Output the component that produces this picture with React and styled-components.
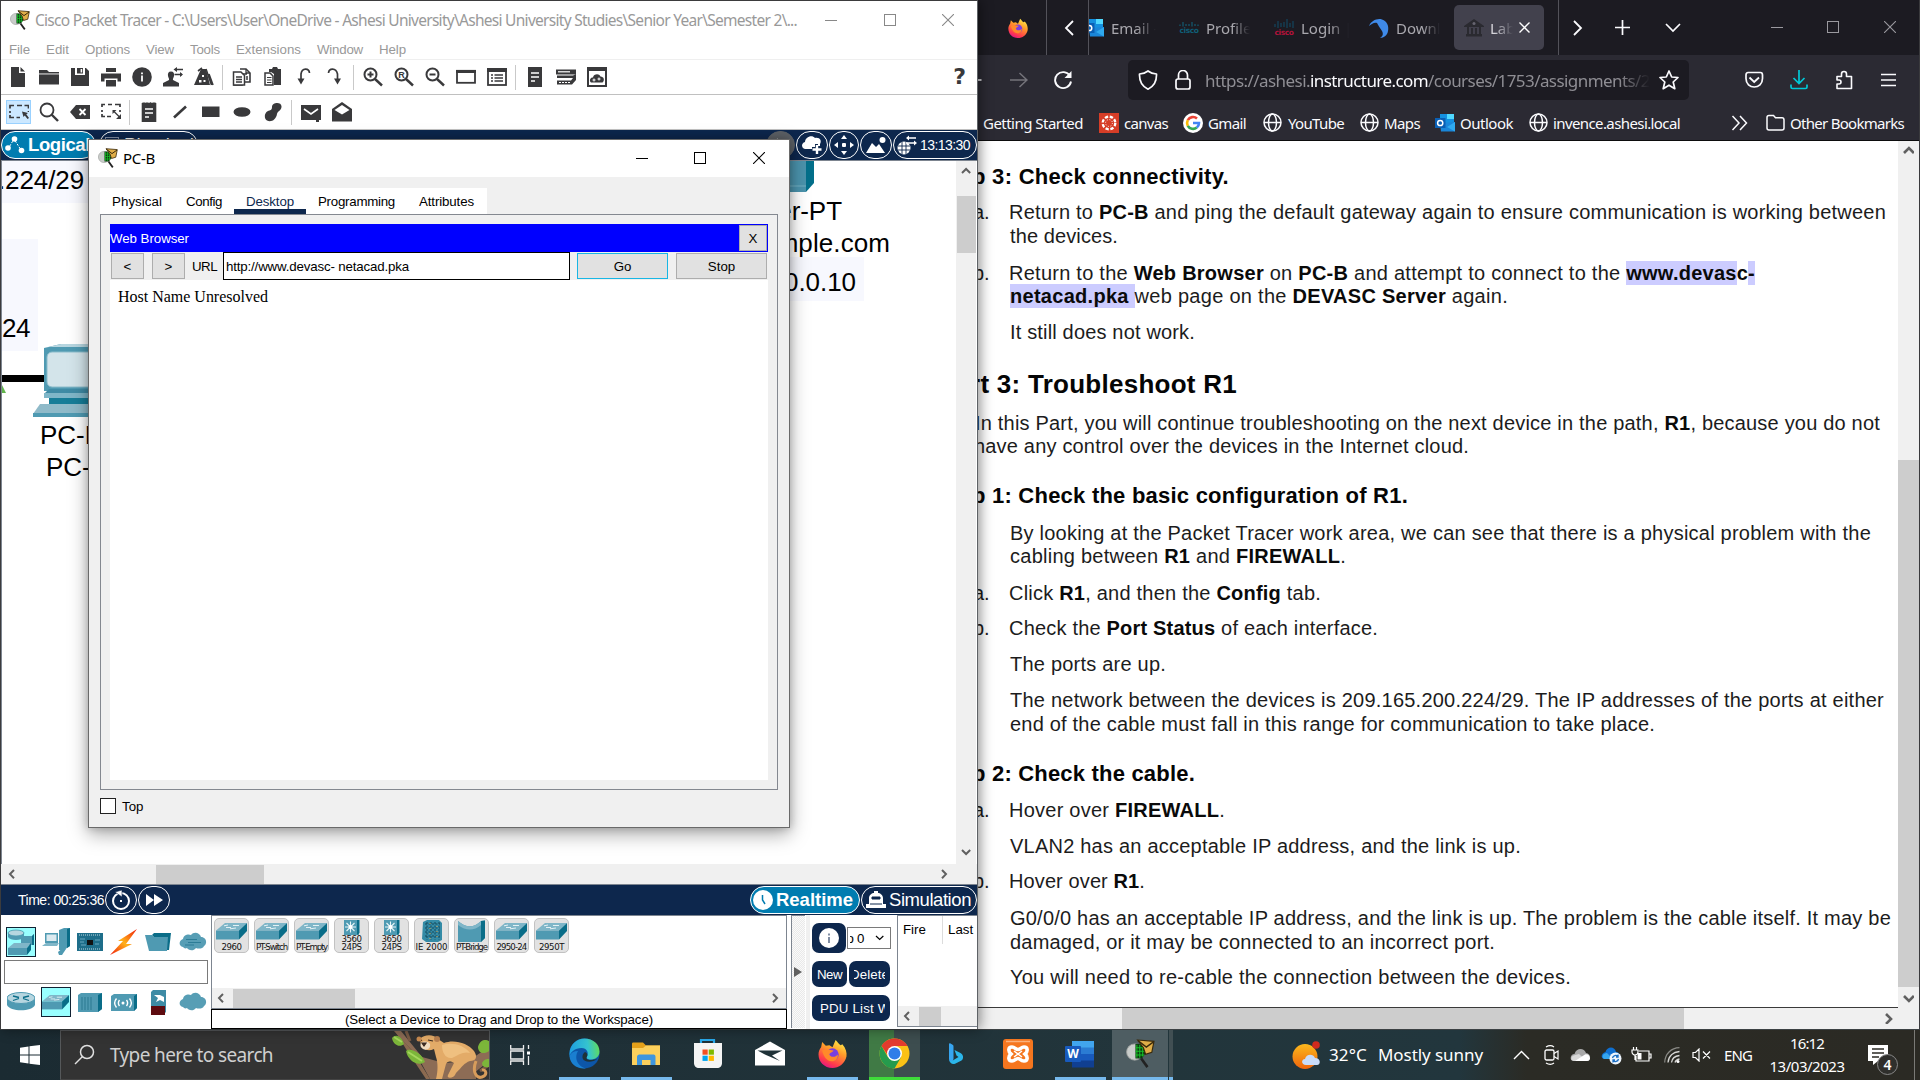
import React, { useLayoutEffect, useRef, useState } from "react";
import styled, { createGlobalStyle, css } from "styled-components";

const SANS = `"Liberation Sans", Arial, sans-serif`;
const UI = `"Noto Sans", "Open Sans", sans-serif`;
const NAVY = "#0d274d";
const INK = "#39393b";

const Global = createGlobalStyle`
  * { box-sizing: border-box; }
  html, body { margin: 0; padding: 0; background: #1f3036; }
  svg { display: block; flex: none; }
`;

/* ---------- text that keeps a fixed advance width ---------- */
const FitBox = styled.span`
  display: block;
  flex: none;
  width: ${(p) => p.$w}px;
  white-space: pre;
`;
const FitText = styled.span`
  display: inline-block;
  white-space: pre;
`;
function Fit({ w, children }) {
  const ref = useRef(null);
  const [spacing, setSpacing] = useState(0);
  useLayoutEffect(() => {
    const el = ref.current;
    el.style.letterSpacing = "0px";
    const natural = el.getBoundingClientRect().width;
    const next = (w - natural) / el.textContent.length;
    el.style.letterSpacing = `${next}px`;
    setSpacing(next);
  }, [w]);
  return (
    <FitBox $w={w}>
      <FitText ref={ref} style={{ letterSpacing: `${spacing}px` }}>{children}</FitText>
    </FitBox>
  );
}

const Svg = ({ w = 20, h = w, vb, children, ...rest }) => (
  <svg width={w} height={h} viewBox={vb || `0 0 ${w} ${h}`} fill="none" {...rest}>{children}</svg>
);

/* ---------- shell ---------- */
const Desktop = styled.div`
  width: 1920px;
  height: 1080px;
  display: flex;
  flex-direction: column;
  overflow: hidden;
  font-family: ${SANS};
`;
const Windows = styled.div`
  height: 1030px;
  display: flex;
  border-bottom: 1px solid #3c4143;
`;
const Row = styled.div`
  display: flex;
  align-items: center;
`;
const Space = styled.div`
  flex: none;
  width: ${(p) => p.$w}px;
`;
const Grow = styled.div`
  flex: 1;
`;

/* ---------- packet tracer window ---------- */
const Tracer = styled.section`
  position: relative;
  z-index: 2;
  flex: none;
  width: 978px;
  height: 1029px;
  display: flex;
  flex-direction: column;
  background: #fff;
  border: 1px solid #3b3b3d;
  border-bottom: 0;
  border-right-color: #5e6266;
  box-shadow: 2px 0 12px rgba(0, 0, 0, 0.45);
`;
const TitleBar = styled(Row)`
  height: 38px;
  padding-left: 9px;
  font: 15.5px/20px ${UI};
  color: #999;
  gap: 5px;
  flex: none;
`;
const Captions = styled.div`
  display: flex;
  align-self: stretch;
  padding-right: ${(p) => p.$pr || 0}px;
  padding-bottom: 1px;
`;
const Caption = styled.div`
  display: flex;
  align-items: center;
  justify-content: center;
  flex: none;
  width: ${(p) => p.$w || 58.5}px;
  color: ${(p) => p.$c};
`;
const MenuBar = styled(Row)`
  height: 21px;
  flex: none;
  padding-left: 8px;
  gap: 16px;
  font-size: 13.3px;
  color: #999;
  border-bottom: 1px solid #efefef;
`;
const ToolBar = styled(Row)`
  height: 35px;
  flex: none;
  padding-left: 1px;
  border-bottom: 1px solid #c0c0c0;
  color: ${INK};
`;
const Tool = styled.div`
  width: 31px;
  height: 34px;
  display: flex;
  align-items: center;
  justify-content: center;
  flex: none;
`;
const ActiveTool = styled.div`
  width: 25px;
  height: 24px;
  margin-left: 2px;
  display: flex;
  align-items: center;
  justify-content: center;
  background: #cce8ff;
  border: 1px solid #99d1ff;
`;
const ToolSep = styled.div`
  width: 1px;
  height: 25px;
  margin: 0 3px;
  background: #c9c9c9;
  flex: none;
`;
const Help = styled.div`
  margin-right: 11px;
  font: bold 22px/24px "DejaVu Sans", sans-serif;
  color: ${INK};
`;
const NavyBar = styled(Row)`
  height: ${(p) => p.$h}px;
  flex: none;
  background: ${NAVY};
  border-top: ${(p) => (p.$line ? "1px solid #7d8590" : "0")};
  color: #fff;
  gap: 1px;
`;
const Pill = styled.div`
  display: flex;
  align-items: center;
  justify-content: ${(p) => p.$j || "center"};
  flex: none;
  width: ${(p) => p.$w}px;
  height: 28px;
  padding-left: ${(p) => p.$pl || 0}px;
  gap: 3px;
  border: 1px solid ${(p) => p.$line || "#fff"};
  border-radius: 14px;
  background: ${(p) => p.$bg || "transparent"};
  color: #fff;
  font-size: ${(p) => p.$fs || 18.5}px;
  font-weight: ${(p) => (p.$bold ? 700 : 400)};
`;
const SimTime = styled.div`
  font-size: 14px;
`;
const Workspace = styled.div`
  display: flex;
  height: 704px;
  flex: none;
  border-top: 1px solid #7d8590;
  border-left: 1px solid #7d8590;
`;
const Canvas = styled.div`
  position: relative;
  width: 954px;
  overflow: hidden;
  background: #fff;
`;
const Tag = styled.div`
  position: absolute;
  left: ${(p) => p.$x}px;
  top: ${(p) => p.$y}px;
  width: ${(p) => p.$w || "auto"};
  height: ${(p) => p.$h || "auto"};
  background: ${(p) => p.$bg || "transparent"};
  font-size: 26px;
  line-height: 32px;
  white-space: pre;
  color: #000;
`;
const VScroll = styled.div`
  width: ${(p) => p.$w}px;
  flex: none;
  display: flex;
  flex-direction: column;
  align-items: center;
  background: #f0f0f0;
  color: #606060;
`;
const HScroll = styled(Row)`
  height: ${(p) => p.$h}px;
  flex: none;
  background: #f0f0f0;
  color: #606060;
`;
const Thumb = styled.div`
  background: #cdcdcd;
  flex: none;
  width: ${(p) => p.$w}px;
  height: ${(p) => p.$h}px;
`;
const ArrowCell = styled.div`
  height: ${(p) => p.$h}px;
  padding-top: ${(p) => p.$pt}px;
`;
const Bottom = styled.div`
  display: flex;
  height: 114px;
  background: #fff;
  flex: none;
`;
const Kinds = styled.div`
  width: 210px;
  flex: none;
  display: flex;
  flex-direction: column;
  padding: 12px 0 0 3px;
`;
const KindRow = styled.div`
  display: grid;
  grid-template-columns: repeat(6, 34.4px);
  height: 30px;
  align-items: center;
  justify-items: center;
`;
const Kind = styled.div`
  width: 30px;
  height: 30px;
  display: flex;
  align-items: center;
  justify-content: center;
  ${(p) => p.$on && css`background: #99ffff; border: 1px solid #123;`}
`;
const SearchBox = styled.div`
  width: 204px;
  height: 24px;
  margin: 3px 0 3px;
  border: 1px solid #7a7a7a;
  background: #fff;
`;
const Devices = styled.div`
  width: 576px;
  flex: none;
  display: flex;
  flex-direction: column;
`;
const DeviceView = styled.div`
  height: 94px;
  border: 1px solid #7d8590;
  display: flex;
  flex-direction: column;
  justify-content: space-between;
`;
const DeviceRow = styled.div`
  display: flex;
  gap: 5px;
  padding: 2px 0 0 2px;
`;
const Device = styled.div`
  width: 35px;
  height: 35px;
  display: flex;
  flex-direction: column;
  align-items: center;
  justify-content: space-between;
  padding-bottom: 1px;
  border: 1px solid #c2c2c2;
  border-radius: 5px;
  background: #e2e2e2;
  font: 8.6px/8px "DejaVu Sans", sans-serif;
  color: #111;
`;
const DeviceArt = styled.div`
  flex: 1;
  display: flex;
  align-items: center;
`;
const Hint = styled.div`
  height: 20px;
  border: 1px solid #000;
  display: flex;
  justify-content: center;
  align-items: center;
  font-size: 13.3px;
`;
const Splitter = styled.div`
  width: 14px;
  height: 113px;
  margin-left: 4px;
  border-left: 1px solid #7d8590;
  border-top: 1px solid #7d8590;
  background: repeating-conic-gradient(#e9e9e9 0 25%, #fafafa 0 50%) 0 0 / 2px 2px;
  display: flex;
  align-items: center;
  flex: none;
`;
const Pdu = styled.div`
  width: 91px;
  margin-left: 1px;
  padding: 8px 0 0 2px;
  border-left: 4px solid #f0f0f0;
  flex: none;
  display: flex;
  flex-direction: column;
  gap: 8px;
`;
const NavyButton = styled.div`
  width: ${(p) => p.$w}px;
  height: ${(p) => p.$h || 26}px;
  padding: 0 5px;
  display: flex;
  align-items: center;
  justify-content: center;
  overflow: hidden;
  background: ${NAVY};
  border-radius: 7px;
  color: #fff;
  font-size: 13.3px;
`;
const Clip = styled.div`
  overflow: hidden;
  display: flex;
  justify-content: ${(p) => p.$j || "center"};
  width: 100%;
`;
const Combo = styled.div`
  width: 44px;
  height: 22px;
  padding: 0 6px 0 2px;
  border: 1px solid #7a7a7a;
  display: flex;
  align-items: center;
  justify-content: space-between;
  font-size: 13.3px;
`;
const Half = styled.span`
  display: inline-flex;
  justify-content: flex-end;
  width: 4px;
  margin-right: 3px;
  overflow: hidden;
`;
const Events = styled.div`
  flex: 1;
  height: 112px;
  border: 1px solid #7d8590;
  border-right: 0;
  display: flex;
  flex-direction: column;
  overflow: hidden;
  font-size: 13.3px;
`;
const EventHead = styled.div`
  display: grid;
  grid-template-columns: 45px 1fr;
  height: 27px;
  align-items: center;
`;
const HeadCell = styled.div`
  height: 100%;
  padding-left: 5px;
  line-height: 28px;
  border-right: ${(p) => (p.$line ? "1px solid #dcdcdc" : "0")};
`;

/* ---------- PC-B dialog ---------- */
const Dialog = styled.div`
  position: absolute;
  left: 87px;
  top: 138px;
  z-index: 3;
  width: 702px;
  height: 689px;
  display: flex;
  flex-direction: column;
  background: #f0f0f0;
  border: 1px solid #6a6a6a;
  box-shadow: 0 6px 18px rgba(0, 0, 0, 0.35), 0 0 8px rgba(0, 0, 0, 0.2);
  font-size: 13.3px;
`;
const DialogTitle = styled(Row)`
  height: 37px;
  background: #fff;
  padding: 0 0 1px 9px;
  gap: 5px;
  font: 15px/20px ${UI};
  flex: none;
`;
const Tabs = styled.div`
  display: flex;
  width: 387px;
  height: 26px;
  margin: 11px 0 0 11px;
  background: #fff;
  flex: none;
`;
const Tab = styled.div`
  display: flex;
  align-items: center;
  padding: 0 12px;
  color: ${(p) => (p.$on ? NAVY : "#000")};
  box-shadow: ${(p) => (p.$on ? `inset 0 -5px 0 ${NAVY}` : "none")};
`;
const Pane = styled.div`
  width: 678px;
  height: 576px;
  margin-left: 11px;
  padding: 9px;
  border: 1px solid #848890;
  display: flex;
  flex-direction: column;
  flex: none;
`;
const BrowserHead = styled(Row)`
  height: 28px;
  background: #0000ff;
  color: #fff;
  justify-content: space-between;
  padding-right: 1px;
`;
const Button = styled.div`
  width: ${(p) => p.$w}px;
  height: 26px;
  flex: none;
  display: flex;
  align-items: center;
  justify-content: center;
  background: #e1e1e1;
  border: 1px solid ${(p) => p.$line || "#adadad"};
  color: #000;
`;
const UrlInput = styled.div`
  width: 347px;
  height: 28px;
  margin: 0 7px 0 6px;
  padding-left: 2px;
  border: 1px solid #000;
  background: #fff;
  display: flex;
  align-items: center;
`;
const Page = styled.div`
  flex: 1;
  background: #fff;
  padding: 8px;
  font: 16px/18px "Liberation Serif", serif;
`;
const TopRow = styled(Row)`
  gap: 6px;
  padding: 8px 0 0 11px;
`;
const Check = styled.div`
  width: 16px;
  height: 16px;
  border: 1px solid #222;
  background: #fff;
`;

/* ---------- firefox ---------- */
const Fox = styled.section`
  width: 942px;
  height: 1029px;
  display: flex;
  flex-direction: column;
  background: #2b2a33;
  border-right: 1px solid #3a3a3d;
  overflow: hidden;
  color: #fbfbfe;
  font-family: ${UI};
`;
const TabStrip = styled(Row)`
  height: 55px;
  background: #1c1b22;
  flex: none;
`;
const StripSep = styled.div`
  width: 1px;
  height: 55px;
  background: #53525a;
  flex: none;
`;
const FoxTab = styled(Row)`
  width: ${(p) => p.$w}px;
  height: 45px;
  flex: none;
  gap: 7px;
  font-size: 15px;
  overflow: hidden;
  color: #a9a8ae;
`;
const Fade = styled.div`
  overflow: hidden;
  white-space: pre;
  flex: none;
  width: ${(p) => p.$w}px;
  mask-image: linear-gradient(to right, #000 ${(p) => p.$from || 50}%, transparent 100%);
`;
const ActiveTab = styled(Row)`
  width: 90px;
  height: 45px;
  margin-left: -10px;
  padding-left: 10px;
  gap: 6px;
  flex: none;
  border-radius: 5px;
  background: #42414d;
  font-size: 15px;
  color: #d5d4da;
`;
const CiscoMark = styled.div`
  width: 20px;
  height: 20px;
  flex: none;
  display: flex;
  flex-direction: column;
  align-items: center;
  padding-top: ${(p) => (p.$tall ? 0 : 4)}px;
  color: ${(p) => p.$word};
  font: bold 7.5px/8px "DejaVu Sans", sans-serif;
`;
const NavRow = styled(Row)`
  height: 50px;
  flex: none;
`;
const UrlBar = styled(Row)`
  width: 561px;
  height: 40px;
  flex: none;
  border-radius: 5px;
  background: #1c1b22;
  padding-left: 10px;
  color: #8f8e94;
  font-size: 17px;
`;
const UrlFade = styled.div`
  width: 445px;
  mask-image: linear-gradient(to right, #000 93%, transparent 100%);
`;
const Bright = styled.span`
  color: #fbfbfe;
`;
const Bookmarks = styled(Row)`
  height: 35px;
  flex: none;
  padding-left: 5px;
  font-size: 15px;
`;
const View = styled.div`
  flex: 1;
  display: flex;
  border-top: 1px solid #0c0c0d;
  background: #fff;
`;
const DocSide = styled.div`
  width: 920px;
  display: flex;
  flex-direction: column;
`;
const Doc = styled.article`
  height: 867px;
  border-bottom: 1px solid #3a3a3a;
  overflow: hidden;
  color: #1c1c1c;
  font-family: ${SANS};
  font-size: 20px;
  line-height: 24px;
  b { color: #0a0a0a; }
`;
const DocLine = styled.div`
  display: flex;
  height: 24px;
  align-items: center;
  margin-top: ${(p) => p.$mt}px;
  margin-left: ${(p) => p.$x}px;
  font-size: ${(p) => p.$fs || 20}px;
  font-weight: ${(p) => (p.$bold ? 700 : 400)};
  color: ${(p) => (p.$bold ? "#050505" : "inherit")};
`;
const Marker = styled.span`
  width: 36px;
  flex: none;
`;
const Marked = styled.span`
  background: #ccccff;
  padding: 1px 0;
`;

/* ---------- taskbar ---------- */
const Taskbar = styled(Row)`
  height: 50px;
  background: linear-gradient(to right, #1b2b32 0, #1f3037 30%, #22353b 60%, #22363d 76%, #2b2b25 79.5%, #2b2a24 100%);
  color: #fff;
  font-family: ${UI};
`;
const Start = styled.div`
  width: 60px;
  display: flex;
  justify-content: center;
`;
const Search = styled(Row)`
  width: 430px;
  height: 50px;
  background: #333;
  border: 1px solid #55585a;
  border-bottom-color: #444;
  padding-left: 13px;
  font-size: 19px;
  color: #cfcfcf;
  flex: none;
`;
const AppSlot = styled.div`
  width: 62px;
  height: 50px;
  flex: none;
  display: flex;
  justify-content: center;
`;
const AppCell = styled.div`
  width: ${(p) => p.$w || 51}px;
  height: 50px;
  display: flex;
  align-items: center;
  justify-content: center;
  background: ${(p) => p.$bg || "transparent"};
  border-bottom: 3px solid ${(p) => p.$line || "transparent"};
  background-clip: padding-box;
`;
const TrayText = styled.div`
  font-size: ${(p) => p.$fs}px;
  line-height: 24px;
`;
const Clock = styled.div`
  width: 76px;
  display: flex;
  flex-direction: column;
  align-items: center;
  margin-top: -1px;
  font-size: 15px;
  line-height: 23px;
`;
const Notice = styled.div`
  position: relative;
  width: 31px;
  height: 32px;
  padding-top: 5px;
`;
const Badge = styled.div`
  position: absolute;
  left: 9px;
  top: 15px;
  width: 21px;
  height: 21px;
  border-radius: 50%;
  border: 1px solid #888;
  background: #2f2f2c;
  font-size: 14px;
  font-weight: 600;
  line-height: 19px;
  text-align: center;
`;
const TrayEdge = styled.div`
  width: 6px;
  height: 50px;
  border-left: 1px solid #7a7a76;
`;

/* ---------- small drawings ---------- */
const MinIcon = () => <Svg w={12}><path d="M0 6.5H12" stroke="currentColor" /></Svg>;
const MaxIcon = () => <Svg w={12}><rect x=".5" y=".5" width="11" height="11" stroke="currentColor" /></Svg>;
const CloseIcon = () => <Svg w={12}><path d="M0 0L12 12M12 0L0 12" stroke="currentColor" strokeWidth="1.1" /></Svg>;
const CaptionSet = ({ c, w, pr }) => (
  <Captions $pr={pr}>
    <Caption $c={c} $w={w}><MinIcon /></Caption><Caption $c={c} $w={w}><MaxIcon /></Caption><Caption $c={c} $w={w}><CloseIcon /></Caption>
  </Captions>
);
const Chevron = ({ dir, w = 7, sw = 2 }) => {
  const h = w * 1.7;
  if (dir === "left" || dir === "right")
    return <Svg w={w + 2} h={h}><path d={dir === "left" ? `M${w} 1L2 ${h / 2}L${w} ${h - 1}` : `M2 1L${w} ${h / 2}L2 ${h - 1}`} stroke="currentColor" strokeWidth={sw} /></Svg>;
  return <Svg w={h} h={w + 2}><path d={dir === "up" ? `M1 ${w}L${h / 2} 2L${h - 1} ${w}` : `M1 2L${h / 2} ${w}L${h - 1} 2`} stroke="currentColor" strokeWidth={sw} /></Svg>;
};

const TracerLogo = ({ s = 20 }) => (
  <Svg w={s} vb="0 0 20 20">
    <circle cx="6" cy="9" r="5.6" fill="#c9ccca" stroke="#9da09e" strokeWidth=".6" />
    <path d="M6.500 3.500H12L14 9L11 13.500H6.500Z" fill="#0b3a10" />
    <path d="M7.5 4V13M9.5 4V13M11.5 5V12M6.500 6H12.5M6.500 8.5H13.5M6.500 11H12.5" stroke="#18c028" strokeWidth=".7" />
    <path d="M8 .7L19.3 1.600L17.8 9.2L13.500 10.500L12 6Z" fill="#e0ae48" stroke="#3a2a0c" strokeWidth=".8" />
    <path d="M8.2 1L14 5.6L19 2" stroke="#3a2a0c" strokeWidth="1" />
    <path d="M10.5 13.500L14.8 19.4" stroke="#222" strokeWidth="1.8" />
  </Svg>
);

const K = "currentColor";
const toolIcons = {
  file: <path d="M3 0H11V6H17V20H3ZM12.5 0L17 4.5H12.5Z" fill={K} />,
  folder: <><path d="M0 3H8L10 5H20V6.4H0Z" fill={K} /><path d="M0 7.4H20V17.5H0Z" fill={K} /></>,
  save: <path fillRule="evenodd" d="M1 1H5V8H15V1H16L19 4V19H1ZM7 1H13V6.5H7ZM10.6 2V5.5H12.2V2Z" fill={K} />,
  print: <><path d="M5 1H15V5H5ZM0 6.5H20V14.5H16.5V11.5H3.5V14.5H0Z" fill={K} /><path d="M5 13H15V19.5H5Z" fill={K} /></>,
  info: <><circle cx="10" cy="10" r="9.8" fill={K} /><path d="M10 8.5V14.5M10 5.5V7.2" stroke="#fff" strokeWidth="1.8" /></>,
  user: <><path d="M8 4.5C10.5 4.5 11.5 6.5 11 9C10.6 11 9.6 11.5 10 13L16 16V19.5H0V16L6 13C6.4 11.5 5.4 11 5 9C4.5 6.500 5.500 4.500 8 4.500Z" fill={K} /><path d="M12 2.500H20M19 7.500H11.500" stroke={K} strokeWidth="1.500" /><path d="M14 0V5L10.500 2.500ZM17 5V10L20 7.500Z" fill={K} /></>,
  measure: <><path fillRule="evenodd" d="M7 2L12 2L16 18H0L7 2ZM8 8V10H10V8ZM5 13V15.500H7.500V13ZM9.500 13H11.500V15H9.500Z" fill={K} /><path d="M4 4L8 1M12 2L17.500 18M15 7L19 18" stroke={K} strokeWidth="1.600" /></>,
  copy: <><path d="M8 2H14L18 6V15H13M6 6H2V18H10V16" stroke={K} strokeWidth="1.600" /><path d="M4 5H9L12.500 8.500V18H1.500V5Z" fill="#fff" stroke={K} strokeWidth="1.500" /><path d="M4 10H10M4 12.500H10M4 15H10M14 2V6H18M11 7H15M14 10H16M14 12H16" stroke={K} strokeWidth="1.300" /></>,
  paste: <><path d="M6 2H9L10 0H14L15 2H18V18H11V7L8 5H6Z" fill={K} /><path d="M2 6H7L10 9V18H2Z" fill="#fff" stroke={K} strokeWidth="1.500" /><path d="M4 10.500H8.500M4 13H8.500M4 15.500H8.500" stroke={K} strokeWidth="1.200" /></>,
  undo: <><path d="M15.500 6C15 1 8 .5 7 7V13" stroke={K} strokeWidth="1.700" /><path d="M3.500 11.500H10.500L7 17.500Z" fill={K} /></>,
  redo: <><path d="M3.500 6C4 1 11 .5 12.500 7V13" stroke={K} strokeWidth="1.700" /><path d="M9 11.500H16L12.500 17.500Z" fill={K} /></>,
  zoomIn: <><circle cx="7.500" cy="7.500" r="6" stroke={K} strokeWidth="2" /><path d="M12 12L19 18.500" stroke={K} strokeWidth="2.400" /><path d="M4.500 7.500H10.500M7.500 4.500V10.500" stroke={K} strokeWidth="2" /></>,
  zoomR: <><circle cx="7.500" cy="7.500" r="6" stroke={K} strokeWidth="2" /><path d="M12 12L19 18.500" stroke={K} strokeWidth="2.400" /><text x="7.600" y="10.700" textAnchor="middle" fill={K} fontFamily="Liberation Sans, sans-serif" fontWeight="700" fontSize="9">R</text></>,
  zoomOut: <><circle cx="7.500" cy="7.500" r="6" stroke={K} strokeWidth="2" /><path d="M12 12L19 18.500" stroke={K} strokeWidth="2.400" /><path d="M4.500 7.500H10.500" stroke={K} strokeWidth="2" /></>,
  win: <><rect x="1" y="3.800" width="18" height="12" stroke={K} strokeWidth="1.800" /><path d="M0 3H20V6H0Z" fill={K} /></>,
  list: <><rect x="1" y="2" width="18" height="16" stroke={K} strokeWidth="1.800" /><path d="M0 1H20V5H0Z" fill={K} /><path d="M4 8H6M7.500 8H16M4 11H6M7.500 11H16M4 14H6M7.500 14H16" stroke={K} strokeWidth="1.600" /></>,
  note: <><path d="M3 0H17V20H3Z" fill={K} /><path d="M6 6H14M6 10H14M6 14H10" stroke="#fff" strokeWidth="1.400" /></>,
  rack: <><path d="M0 2.500H20V7.500H0Z" fill={K} /><path d="M2 4.800H14" stroke="#fff" strokeWidth="1.200" /><path d="M1 8.500H17L20 7V13L16 17.500H1V13.500H15L17 11H1Z" fill={K} /><path d="M3 15.500H14" stroke="#fff" strokeDasharray="2 1" /></>,
  cloudWin: <><rect x="1" y="1" width="18" height="18" stroke={K} strokeWidth="2" /><path d="M0 0H20V4H0Z" fill={K} /><path d="M4 15.500C1.500 13 4 10 6 10.500C6.500 7 12 6 13.500 9.500C17 9.500 18 13.500 15.500 15.500Z" fill={K} /><circle cx="7" cy="13" r="1" stroke="#fff" /><circle cx="12" cy="12" r="1" stroke="#fff" /></>,
  select: <><path d="M1 6.500V3.500H5M8 3.500H13M15.500 3.500H19.500V6.500M1 9V11M1 13V15.500H5M7.500 15.500H11M19.500 9V10" stroke={K} strokeWidth="1.700" /><path d="M13 9.500L19 11L17.300 12.300L20 16L18.500 17L15.800 13.500L14.500 15Z" fill={K} /></>,
  search: <><circle cx="8" cy="8" r="6.500" stroke={K} strokeWidth="1.800" /><path d="M12.500 12.500L19 19" stroke={K} strokeWidth="2.400" /></>,
  erase: <><path d="M6 3H20V17H6L0 10Z" fill={K} /><path d="M9.500 7L15.500 13M15.500 7L9.500 13" stroke="#fff" strokeWidth="1.800" /></>,
  resize: <><path d="M1 5V2.500H4M7 2.500H11M14 2.500H19V5M1 8V10M1 12V14.500H4M6 14.500H10M19 8V10" stroke={K} strokeWidth="1.700" /><path d="M13 9.500L18.500 15" stroke={K} strokeWidth="1.200" /><path d="M20 12V17H15ZM11.500 12V8H15.500Z" fill={K} /></>,
  pad: <><path d="M3 1H17V20H3ZM5 0V2M8 0V2M11.500 0V2M15 0V2" fill={K} stroke={K} strokeWidth=".6" /><path d="M6 7H14M6 11H14M6 15H10" stroke="#fff" strokeWidth="1.400" /></>,
  line: <path d="M4 15.500L16 4.500" stroke={K} strokeWidth="2.600" />,
  rect: <path d="M1 4.500H18.500V15H1Z" fill={K} />,
  ellipse: <ellipse cx="10" cy="10" rx="8.500" ry="4.800" fill={K} />,
  blob: <path d="M9 5C9 0 19 -.5 18.500 5C18 9 15 8.500 14 12C13 18 8 20.500 4 18.500C0 16 2 9 6.500 8.500C8.500 8 9 7 9 5Z" fill={K} />,
  mail: <><path d="M0 3H20V18H18V20H15V18H0Z" fill={K} /><path d="M3 7L10 12L17 7" stroke="#fff" strokeWidth="1.600" /></>,
  mailOpen: <><path d="M0 7L10 0L20 7V19.500H0Z" fill={K} /><path d="M2.500 8L10 3L17.500 8L10 12.500Z" fill="#fff" /></>,
};
const ToolItem = ({ name, on }) => {
  const icon = <Svg>{toolIcons[name]}</Svg>;
  return <Tool>{on ? <ActiveTool>{icon}</ActiveTool> : icon}</Tool>;
};
const row1 = ["file", "folder", "save", "print", "info", "user", "measure", "|", "copy", "paste", "undo", "redo", "|", "zoomIn", "zoomR", "zoomOut", "win", "list", "|", "note", "rack", "cloudWin"];
const row2 = ["select", "search", "erase", "resize", "|", "pad", "line", "rect", "ellipse", "blob", "|", "mail", "mailOpen"];

/* teal network hardware */
const T = { face: "#4f9ab2", top: "#7fb6c8", side: "#0a6d88", light: "#b7d6e0" };
const SwitchArt = ({ w = 31, h = 18 }) => (
  <Svg w={w} h={h} vb="0 0 31 18">
    <path d="M0 8.500L9 1H31L23 8.500Z" fill={T.top} />
    <path d="M0 8.500H23V17.500H0Z" fill={T.face} />
    <path d="M23 8.500L31 1V9L23 17.500Z" fill={T.side} />
    <path d="M10 5.500H15M17 3.500H23M8 3.800L12 3M14 6.800L20 6" stroke="#e3f0f4" strokeWidth="1" />
  </Svg>
);
const MultilayerArt = () => (
  <Svg w={17} h={16}>
    <path d="M1 1H16V16H1Z" fill={T.face} /><path d="M14 1H16.500V14L14 16Z" fill={T.side} />
    <path d="M7.500 2.500V13.500M2 8H13M3.500 4L11.500 12M11.500 4L3.500 12" stroke="#e8f4f7" strokeWidth="1.100" />
    <circle cx="7.500" cy="8" r="2" fill="#fff" />
  </Svg>
);
const IndustrialArt = () => (
  <Svg w={24} h={23}>
    <path d="M3 2L7 0H19L22 3V20L18 22H6L2 19Z" fill="#348ba6" />
    <path d="M5 4H20M5 8H20M5 12H20M5 16H20M7 2V20M11 2V20M15 2V20M19 2V20" stroke="#12475a" strokeWidth="1" strokeDasharray="2 1.500" />
    <path d="M10 3V19M17 6V18" stroke="#e8a94a" strokeDasharray="1 4" />
  </Svg>
);
const BridgeArt = () => (
  <Svg w={27} h={22}>
    <path d="M0 1C8 8 16 8 23 1L27 .5V18L23 22H0Z" fill={T.face} />
    <path d="M0 1C8 8 16 8 23 1V5C16 11 8 11 0 5Z" fill={T.top} />
    <path d="M23 1L27 .500V18L23 22Z" fill={T.side} />
  </Svg>
);
const CloudArt = ({ lines }) => (
  <Svg w={28} h={20}>
    <path d="M4 15C-1 14 0 8 4 7C5 2 10 2 12 3C15 -1 21 1 22 5C27 5 29 11 25 14C24 17 19 17 17 16C14 20 9 18 8 16C6 17 5 16 4 15Z" fill="#579eb5" />
    {lines && <path d="M7 7.500H18M9 10.500H22M6 13H15" stroke="#2d7d97" strokeWidth="1.200" />}
  </Svg>
);
const kindsTop = [
  <Svg w={28}><ellipse cx="9" cy="5" rx="8" ry="3" fill={T.light} stroke={T.side} strokeWidth=".5" /><path d="M1 5V9C3 13 15 13 17 9V5C15 9 3 9 1 5Z" fill={T.face} /><path d="M14 8H25L27 6V17H14Z" fill={T.face} /><path d="M25 8L27 6V17H25Z" fill={T.side} /><path d="M1 20L7 15H24L20 20Z" fill={T.top} /><path d="M1 20H20V27H1Z" fill={T.face} /><path d="M20 20L24 15V22L20 27Z" fill={T.side} /></Svg>,
  <Svg w={28}><path d="M17 2L22 0H28V18L22 22H17Z" fill={T.face} /><path d="M25 1L28 0V18L25 20Z" fill={T.side} /><path d="M3 5H16V15H3Z" fill={T.face} /><path d="M4.500 6.500H14.500V13H4.500Z" fill="#dceaf0" /><path d="M0 18L4 15H17L15 18Z" fill={T.top} /><path d="M16 24L22 19L24 21L20 27H17Z" fill={T.face} /></Svg>,
  <Svg w={26} h={20}><path d="M0 1H26V19H0Z" fill="#1e6e8a" /><path d="M2 3H24M2 17H24" stroke="#bcd8e2" strokeDasharray="1 1" /><rect x="10" y="8" width="6" height="5" fill="#111" /><path d="M3 7H8M3 10H7M18 8H23M18 12H22M4 13H9" stroke="#68a8bf" /></Svg>,
  <Svg w={28}><defs><linearGradient id="bolt" x1="1" y1="0" x2="0" y2="1"><stop offset="0" stopColor="#f01808" /><stop offset=".5" stopColor="#ffb21a" /><stop offset="1" stopColor="#f01808" /></linearGradient></defs><path d="M27 1L8 13H13L0 27L22 16H16Z" fill="url(#bolt)" /></Svg>,
  <Svg w={27} h={20}><path d="M7 3L9 1H26L24 18H20Z" fill={T.side} /><path d="M0 3H7L9 5H23L22 19H4Z" fill={T.face} /></Svg>,
  <CloudArt lines />,
];
const kindsBottom = [
  <Svg w={28} h={20}><path d="M0 6V13C3 20 25 20 28 13V6Z" fill={T.face} /><ellipse cx="14" cy="6" rx="14" ry="5.500" fill={T.light} stroke={T.face} /><path d="M6 4L12 5.500M22 4L16 5.500M6 8.500L12 6.500M22 8.500L16 6.500" stroke={T.side} strokeWidth="1.300" /></Svg>,
  <SwitchArt w={27} h={16} />,
  <Svg w={24} h={21}><path d="M0 3L3 1H24V17L20 20H0Z" fill={T.face} /><path d="M20 3L24 1V17L20 20Z" fill={T.side} /><path d="M4 5V18M7 5V18M10 5V18M13 5V18" stroke="#2a7890" /></Svg>,
  <Svg w={26} h={19}><path d="M0 3L3 1H26V15L23 18H0Z" fill={T.face} /><path d="M23 3L26 1V15L23 18Z" fill={T.side} /><circle cx="12" cy="10" r="1.500" fill="#fff" /><path d="M8.500 7C7 9 7 11 8.500 13M15.500 7C17 9 17 11 15.500 13M5.500 5.500C3 8.500 3 11.500 5.500 14.500M18.500 5.500C21 8.500 21 11.500 18.500 14.500" stroke="#fff" strokeWidth="1.400" /></Svg>,
  <Svg w={15} h={25}><path d="M0 2L2 0H15V22L12 25H0Z" fill="#3e8ba5" /><path d="M0 16H14V25H0Z" fill="#5e0b10" /><path d="M3 5L9 5L13 7V12L9 10L5 12L7 8Z" fill="#fff" /></Svg>,
  <CloudArt />,
];
const devices = [
  [["2960", 20], <SwitchArt />], [["PT-Switch", 31], <SwitchArt />], [["PT-Empty", 31], <SwitchArt />],
  [["3560", 20], <MultilayerArt />, ["24PS", 20]], [["3650", 20], <MultilayerArt />, ["24PS", 20]],
  [["IE 2000", 32], <IndustrialArt />], [["PT-Bridge", 31], <BridgeArt />], [["2950-24", 30], <SwitchArt />], [["2950T", 25], <SwitchArt />],
];

const PcArt = () => (
  <Svg w={90} h={74}>
    <path d="M11 4L28 0H90V47H11Z" fill={T.face} /><path d="M11 4L28 0H90V3H16Z" fill={T.light} />
    <rect x="14" y="8" width="80" height="35" rx="5" fill="#d3e4ea" stroke="#8bbccb" />
    <path d="M16 45H90V54H11V50Z" fill="#3f8ba5" /><path d="M11 49H90V54H11Z" fill={T.top} />
    <path d="M16 54H90V60H16Z" fill="#167d98" /><path d="M7 60H90V70H0Z" fill="#8fbac9" /><path d="M0 69H90V73H0Z" fill={T.face} />
  </Svg>
);

/* firefox chrome drawings */
const FoxLogo = ({ s }) => (
  <Svg w={s} vb="0 0 28 28">
    <defs><linearGradient id="fx" x1=".8" y1="0" x2=".3" y2="1"><stop offset="0" stopColor="#fff04a" /><stop offset=".4" stopColor="#ff9a2a" /><stop offset=".8" stopColor="#ff3a4c" /><stop offset="1" stopColor="#e31587" /></linearGradient></defs>
    <path d="M3 8L4 3L7.500 6.500L11 6L14 8L17 1C19 3 20 5 22 6L23.500 5C27 9 28 13 27.500 17C26 24 20 28 14 28C6 28 .5 22 .5 15C.5 12 1.500 10 3 8Z" fill="url(#fx)" />
    <circle cx="14" cy="15" r="6" fill="#7a3fe0" />
    <path d="M4 11C9 9 12 11 15 11C14 13 11 13 11 15C12 18 17 18 19 15C20 19 16 22 13 21.500C8 21 5 16 4 11Z" fill="#ff8a2a" />
  </Svg>
);
const OutlookIcon = ({ w = 20 }) => (
  <Svg w={w} h={20} vb={`${20 - w} 0 ${w} 20`}>
    <path d="M5 1H19V11H5Z" fill="#1490df" /><path d="M12 1H19V6H12Z" fill="#50d9ff" /><path d="M5 10L20 9V18.500H6Z" fill="#1a86d9" /><path d="M20 9L12 14L20 18.500Z" fill="#2fa9ee" />
    <path d="M0 5H10.500V15H0Z" fill="#0a5fb4" /><circle cx="5.200" cy="10" r="2.600" stroke="#fff" strokeWidth="1.500" />
  </Svg>
);
const CiscoIcon = ({ bars, word, tall, label }) => (
  <CiscoMark $word={word} $tall={tall}>
    <Svg w={20} h={tall ? 11 : 5}><path d={tall ? "M1 9V6M4 10V3M7 9V5M10 9V4M13 10V1M16 9V5M19 10V3" : "M1 4V2.500M4 4.500V0M7 4V2M10 4V2M13 4.500V0M16 4V2M19 4V2.500"} stroke={bars} strokeWidth="1.300" /></Svg>
    <Fit w={19}>{label}</Fit>
  </CiscoMark>
);
const GlobeIcon = () => (
  <Svg w={19} h={19}><circle cx="9.500" cy="9.500" r="8.500" stroke="#fbfbfe" strokeWidth="1.500" /><ellipse cx="9.500" cy="9.500" rx="4" ry="8.500" stroke="#fbfbfe" strokeWidth="1.500" /><path d="M1 9.500H18" stroke="#fbfbfe" strokeWidth="1.500" /></Svg>
);
const CanvasIcon = () => (
  <Svg w={20}><rect width="20" height="20" fill="#d63d27" /><circle cx="10" cy="10" r="6.300" stroke="#fff" strokeWidth="2.300" strokeDasharray="3.300 1.650" /><circle cx="10" cy="10" r="3.400" stroke="#fff" strokeWidth="1" strokeDasharray="1 1.670" /></Svg>
);
const GoogleIcon = () => (
  <Svg w={20}><circle cx="10" cy="10" r="10" fill="#fff" />
    <path d="M14 5.500A6 6 0 0 0 4.800 7.200" stroke="#ea4335" strokeWidth="2.600" /><path d="M4.800 7.200A6 6 0 0 0 4.800 12.800" stroke="#fbbc05" strokeWidth="2.600" /><path d="M4.800 12.800A6 6 0 0 0 13.800 14.600" stroke="#34a853" strokeWidth="2.600" /><path d="M13.800 14.600A6 6 0 0 0 16 10H10" stroke="#4285f4" strokeWidth="2.600" /></Svg>
);

const Step = ({ mt, w, children }) => <DocLine $mt={mt} $x={-6} $fs={22} $bold><Fit w={w}>{children}</Fit></DocLine>;
const Item = ({ mt, mark, w, children }) => <DocLine $mt={mt} $x={-5}><Marker>{mark}</Marker><Fit w={w}>{children}</Fit></DocLine>;
const Text = ({ mt = -1, w, children }) => <DocLine $mt={mt} $x={32}><Fit w={w}>{children}</Fit></DocLine>;

function TracerWindow() {
  return (
    <Tracer>
      <TitleBar>
        <TracerLogo /><Fit w={762}>{"Cisco Packet Tracer - C:\\Users\\User\\OneDrive - Ashesi University\\Ashesi University Studies\\Senior Year\\Semester 2\\..."}</Fit>
        <CaptionSet c="#888" />
      </TitleBar>
      <MenuBar>
        {[["File", 21], ["Edit", 23], ["Options", 45], ["View", 28], ["Tools", 30], ["Extensions", 65], ["Window", 46], ["Help", 27]].map(([t, w]) => <Fit key={t} w={w}>{t}</Fit>)}
      </MenuBar>
      <ToolBar>{row1.map((n, i) => n === "|" ? <ToolSep key={i} /> : <ToolItem key={i} name={n} />)}<Grow /><Help>?</Help></ToolBar>
      <ToolBar>{row2.map((n, i) => n === "|" ? <ToolSep key={i} /> : <ToolItem key={i} name={n} on={n === "select"} />)}</ToolBar>
      <NavyBar $h={30}>
        <Pill $w={95} $pl={3} $j="flex-start" $bg="#007cb0" $bold>
          <Svg w={20}><path d="M3 14L9 4L16 15" stroke="#fff" strokeDasharray="2 1.500" /><circle cx="3" cy="13" r="2.800" fill="#fff" /><circle cx="9.500" cy="4" r="2.800" fill="#fff" /><circle cx="16.500" cy="15.500" r="2.800" fill="#fff" /></Svg>
          <Fit w={62}>Logical</Fit>
        </Pill>
        <Space $w={1} />
        <Pill $w={99} $pl={5} $j="flex-start">
          <Svg w={16}><rect x=".5" y=".5" width="13" height="15" stroke="#8391a8" /><path d="M1 5H13M1 9H13" stroke="#8391a8" /></Svg><Fit w={70}>Physical</Fit>
        </Pill>
        <Grow />
        <Pill $w={29} $bg="#5c6065" $line="#5c6065"><Svg w={16}><path d="M5 2L2 6L7 8M2 6H10C14 6 15 10 12 13" stroke="#fff" strokeWidth="2" /></Svg></Pill>
        <Pill $w={32}><Svg w={22}><path d="M4 15C0 14 0 9 4 8C4 3 11 0 14 4C19 3 21 7 19 10V12H17V10H14V13H11V15Z" fill="#fff" /><path d="M16 11V20M11.500 15.500H20.500" stroke="#fff" strokeWidth="2.400" /></Svg></Pill>
        <Pill $w={30}><Svg w={20}><path d="M10 0L13 4H7ZM10 20L13 16H7ZM0 10L4 7V13ZM20 10L16 7V13Z" fill="#fff" /><rect x="8" y="8" width="4" height="4" rx="1" fill="#fff" /></Svg></Pill>
        <Pill $w={32}><Svg w={20}><path d="M0 18L6 8L10 12L13 9L19 18Z" fill="#fff" /><circle cx="16.500" cy="5" r="3" fill="#fff" /></Svg></Pill>
        <Pill $w={84} $pl={3} $j="flex-start" $fs={14}><Svg w={20}><circle cx="7" cy="13" r="6.500" fill="#fff" /><path d="M1 11H13M1 15H13M5 7V19M9 7V19" stroke={NAVY} strokeWidth=".9" /><path d="M10 3H19M9 8H18" stroke="#fff" strokeWidth="1.600" /><path d="M12 .500V5.500L9 3ZM17 5.500V10.500L20 8Z" fill="#fff" /></Svg><Fit w={50}>13:13:30</Fit></Pill>
      </NavyBar>
      <Workspace>
        <Canvas>
          <Tag $x={0} $y={0} $w="90px" $h="42px" $bg="#f7f8fe" />
          <Tag $x={-4} $y={3}><Fit w={86}>.224/29</Fit></Tag>
          <Tag $x={0} $y={78} $w="36px" $h="112px" $bg="#f7f8fe" />
          <Tag $x={0} $y={151}><Fit w={28}>24</Fit></Tag>
          <Tag $x={0} $y={214} $w="42px" $h="7px" $bg="#000" />
          <Tag $x={0} $y={224}><Svg w={4} h={8}><path d="M0 0L4 8H0Z" fill="#62b54c" /></Svg></Tag>
          <Tag $x={31} $y={183}><PcArt /></Tag>
          <Tag $x={38} $y={258}>PC-PT</Tag>
          <Tag $x={44} $y={290}>PC-B</Tag>
          <Tag $x={777} $y={0}><Svg w={35} h={32}><path d="M0 0H27V31H0Z" fill="#4b93ac" /><path d="M0 25H27" stroke="#75b0c3" /><path d="M27 0H35V22L27 31Z" fill="#036f8a" /></Svg></Tag>
          <Tag $x={722} $y={34}><Fit w={118}>Server-PT</Fit></Tag>
          <Tag $x={670} $y={66}><Fit w={218}>www.example.com</Fit></Tag>
          <Tag $x={770} $y={96} $w="92px" $h="44px" $bg="#f7f8fe" />
          <Tag $x={746} $y={105}><Fit w={108}>10.0.0.10</Fit></Tag>
        </Canvas>
        <VScroll $w={20}>
          <ArrowCell $h={35} $pt={6}><Chevron dir="up" w={6} /></ArrowCell>
          <Thumb $w={19} $h={57} />
          <Grow />
          <ArrowCell $h={17} $pt={1}><Chevron dir="down" w={6} /></ArrowCell>
        </VScroll>
      </Workspace>
      <HScroll $h={20}><Space $w={7} /><Chevron dir="left" w={6} /><Space $w={140} /><Thumb $w={108} $h={19} /><Grow /><Chevron dir="right" w={6} /><Space $w={29} /></HScroll>
      <NavyBar $h={31} $line>
        <Space $w={16} /><SimTime><Fit w={86}>Time: 00:25:36</Fit></SimTime>
        <Pill $w={32}><Svg w={22}><circle cx="11" cy="12" r="8" stroke="#fff" strokeWidth="2" /><path d="M5 3L12 1V8Z" fill="#fff" stroke={NAVY} strokeWidth=".6" /><rect x="10" y="11" width="2" height="2" fill="#fff" /></Svg></Pill>
        <Pill $w={32}><Svg w={18}><path d="M1 3L9 9L1 15ZM9 3L18 9L9 15Z" fill="#fff" /></Svg></Pill>
        <Grow />
        <Pill $w={110} $pl={2} $j="flex-start" $bg="#007cb0" $bold><Svg w={20}><circle cx="10" cy="10" r="10" fill="#fff" /><path d="M9.500 5V10L12 14" stroke="#007cb0" strokeWidth="1.500" /></Svg><Fit w={77}>Realtime</Fit></Pill>
        <Pill $w={116} $pl={4} $j="flex-start"><Svg w={20}><path d="M3 14V8C3 5 6 3 8 3V1H12V3C14 3 17 5 17 8V14ZM0 14H20V18H0Z" fill="#fff" /><path d="M6 7H14V9H6ZM4 14H16" fill={NAVY} stroke={NAVY} /></Svg><Fit w={82}>Simulation</Fit></Pill>
      </NavyBar>
      <Bottom>
        <Kinds>
          <KindRow>{kindsTop.map((k, i) => <Kind key={i} $on={i === 0}>{k}</Kind>)}</KindRow>
          <SearchBox />
          <KindRow>{kindsBottom.map((k, i) => <Kind key={i} $on={i === 1}>{k}</Kind>)}</KindRow>
        </Kinds>
        <Devices>
          <DeviceView>
            <DeviceRow>
              {devices.map(([a, art, b], i) => (
                <Device key={i}>
                  {b ? art : <DeviceArt>{art}</DeviceArt>}
                  <Fit w={a[1]}>{a[0]}</Fit>{b && <Fit w={b[1]}>{b[0]}</Fit>}
                </Device>
              ))}
            </DeviceRow>
            <HScroll $h={20}><Space $w={5} /><Chevron dir="left" w={6} /><Space $w={8} /><Thumb $w={122} $h={19} /><Grow /><Chevron dir="right" w={6} /><Space $w={7} /></HScroll>
          </DeviceView>
          <Hint><Fit w={308}>(Select a Device to Drag and Drop to the Workspace)</Fit></Hint>
        </Devices>
        <Splitter><Svg w={12} h={10}><path d="M2 0L10 5L2 10Z" fill="#606060" /></Svg></Splitter>
        <Pdu>
          <Row><NavyButton $w={34} $h={30}><Svg w={20}><circle cx="10" cy="10" r="10" fill="#fff" /><path d="M10 9V15M10 5.500V7.500" stroke="#6a7a94" strokeWidth="1.700" /></Svg></NavyButton><Space $w={1} /><Combo><Row><Half>o</Half>0</Row><Chevron dir="down" w={5.500} sw={1.200} /></Combo></Row>
          <Row><NavyButton $w={35}><Fit w={25}>New</Fit></NavyButton><Space $w={2} /><NavyButton $w={41}><Clip><Fit w={39}>Delete</Fit></Clip></NavyButton></Row>
          <NavyButton $w={78}><Clip $j="flex-start"><Space $w={3} /><Fit w={106}>PDU List Window</Fit></Clip></NavyButton>
        </Pdu>
        <Events>
          <EventHead><HeadCell $line>Fire</HeadCell><HeadCell>Last</HeadCell></EventHead>
          <Grow />
          <HScroll $h={20}><Space $w={5} /><Chevron dir="left" w={6} /><Space $w={8} /><Thumb $w={22} $h={19} /></HScroll>
        </Events>
      </Bottom>
      <PcDialog />
    </Tracer>
  );
}

function PcDialog() {
  return (
    <Dialog>
      <DialogTitle><TracerLogo /><Fit w={32}>PC-B</Fit><Grow /><CaptionSet c="#000" pr={1} /></DialogTitle>
      <Tabs>{[["Physical", 50], ["Config", 36], ["Desktop", 48], ["Programming", 77], ["Attributes", 55]].map(([t, w]) => <Tab key={t} $on={t === "Desktop"}><Fit w={w}>{t}</Fit></Tab>)}</Tabs>
      <Pane>
        <BrowserHead><Fit w={79}>Web Browser</Fit><Button $w={28}>X</Button></BrowserHead>
        <Row><Space $w={1} /><Button $w={33}>&lt;</Button><Space $w={8} /><Button $w={33}>&gt;</Button><Space $w={7} /><Fit w={25}>URL</Fit>
          <UrlInput><Fit w={183}>http://www.devasc- netacad.pka</Fit></UrlInput>
          <Button $w={91} $line="#18b6e4">Go</Button><Space $w={8} /><Button $w={91}>Stop</Button>
        </Row>
        <Page><Fit w={150}>Host Name Unresolved</Fit></Page>
      </Pane>
      <TopRow><Check />Top</TopRow>
    </Dialog>
  );
}

function FirefoxWindow() {
  const tabs = [
    ["Email -", 45, <OutlookIcon w={15} />, 90, 55],
    ["Profile", 44, <CiscoIcon bars="#14566c" word="#0f5f78" label="cisco" />, 95, 60],
    ["Login |", 48, <CiscoIcon bars="#14425a" word="#b3123a" tall label="cisco" />, 95, 60],
    ["Downl", 44, <Svg w={20}><path d="M0 8C2 3 8 0 13 1.500C18 3 20 8 19 13C18.500 17 15 20 11 20C14 18 14.500 16 13 13L10 8.500L8 5C5 4 3 6 0 8Z" fill="#3f8ae8" /></Svg>, 95, 60],
  ];
  return (
    <Fox>
      <TabStrip>
        <Space $w={30} /><FoxLogo s={20} /><Space $w={18} /><StripSep /><Space $w={17} /><Svg w={10} h={16}><path d="M9 1L2 8L9 15" stroke="#fbfbfe" strokeWidth="1.800" /></Svg><Space $w={14} /><StripSep />
        {tabs.map(([t, w, icon, tw, from]) => <FoxTab key={t} $w={tw}>{icon}<Fade $w={w} $from={from}>{t}</Fade></FoxTab>)}
        <ActiveTab>
          <Svg w={20}><path d="M0 8L10 1L20 8V9H0ZM3 9H5V16H3ZM7 10H9V16H7ZM11 10H13V16H11ZM15 9H17V16H15ZM2 16H18V18.500H2Z" fill="#2a2a30" /><circle cx="10" cy="5.500" r="1.500" fill="#666570" /></Svg>
          <Fade $w={23} $from={20}>Lab</Fade><Svg w={11}><path d="M.5 .5L10.500 10.500M10.500 .5L.5 10.500" stroke="#fff" strokeWidth="1.400" /></Svg>
        </ActiveTab>
        <Space $w={14} /><StripSep /><Space $w={14} /><Svg w={10} h={16}><path d="M1 1L8 8L1 15" stroke="#fbfbfe" strokeWidth="1.800" /></Svg>
        <Space $w={32} /><Svg w={15}><path d="M7.500 0V15M0 7.500H15" stroke="#fbfbfe" strokeWidth="1.700" /></Svg>
        <Space $w={35} /><Svg w={16} h={12}><path d="M1 2L8 9L15 2" stroke="#fbfbfe" strokeWidth="1.700" /></Svg>
        <Grow /><CaptionSet c="#9a999f" w={56.5} pr={1} />
      </TabStrip>
      <NavRow>
        <Svg w={4} h={4}><path d="M0 2H3.500" stroke="#fbfbfe" strokeWidth="1.500" /></Svg><Space $w={28} />
        <Svg w={18} h={16}><path d="M0 8H17M9.500 1L17 8L9.500 15" stroke="#75747b" strokeWidth="1.500" /></Svg><Space $w={25} />
        <Svg w={20}><path d="M17 6A8 8 0 1 0 18 11.500" stroke="#fbfbfe" strokeWidth="1.900" /><path d="M18.500 1V8H11.500Z" fill="#fbfbfe" /></Svg><Space $w={55} />
        <UrlBar>
          <Svg w={20} h={20}><path d="M10 1C12.500 3 15.500 3.800 18.500 4C18.800 11 16 16.500 10 19.200C4 16.500 1.200 11 1.500 4C4.500 3.800 7.500 3 10 1Z" stroke="#fbfbfe" strokeWidth="1.700" strokeLinejoin="round" /></Svg><Space $w={17} />
          <Svg w={16} h={20}><rect x="1" y="9" width="14" height="10" rx="2" stroke="#fbfbfe" strokeWidth="1.700" /><path d="M3.500 9V5A4.500 4.500 0 0 1 12.500 5V9" stroke="#fbfbfe" strokeWidth="1.700" /></Svg><Space $w={14} />
          <UrlFade><Fit w={445}>https://ashesi.<Bright>instructure.com</Bright>/courses/1753/assignments/2</Fit></UrlFade><Space $w={9} />
          <Svg w={20}><path d="M10 1L12.700 7L19 7.500L14.200 12L15.800 18.700L10 15.200L4.200 18.700L5.800 12L1 7.500L7.300 7Z" stroke="#fbfbfe" strokeWidth="1.700" strokeLinejoin="round" /></Svg>
        </UrlBar>
        <Space $w={56} /><Svg w={19} h={18}><path d="M1 4C1 2 2 1.500 3 1.500H15.500C17 1.500 17.500 2 17.500 4V7.500C17.500 13 13.500 16 9.200 16C5 16 1 13 1 7.500Z" stroke="#fbfbfe" strokeWidth="1.700" /><path d="M4.500 6.500L9.200 11L14 6.500" stroke="#fbfbfe" strokeWidth="1.800" /></Svg>
        <Space $w={26} /><Svg w={18} h={20}><path d="M9 0V13M3.500 8L9 13.500L14.500 8M1 14.500V17C1 18 1.500 18.500 2.500 18.500H15.500C16.500 18.500 17 18 17 17V14.500" stroke="#00c8d7" strokeWidth="1.700" /></Svg>
        <Space $w={27} /><Svg w={19} h={20}><path d="M2 6.500H6.500V4A2.500 2.500 0 0 1 11.500 4V6.500H16.500V18.500H2V14H4A2 2 0 0 0 4 10H2Z" stroke="#fbfbfe" strokeWidth="1.600" strokeLinejoin="round" /></Svg>
        <Space $w={27} /><Svg w={15}><path d="M0 1.500H15M0 7H15M0 12.500H15" stroke="#fbfbfe" strokeWidth="1.500" /></Svg>
      </NavRow>
      <Bookmarks>
        <Fit w={100}>Getting Started</Fit><Space $w={16} /><CanvasIcon /><Space $w={5} /><Fit w={44}>canvas</Fit><Space $w={15} /><GoogleIcon /><Space $w={5} /><Fit w={38}>Gmail</Fit>
        <Space $w={17} /><GlobeIcon /><Space $w={6} /><Fit w={56}>YouTube</Fit><Space $w={16} /><GlobeIcon /><Space $w={5} /><Fit w={36}>Maps</Fit>
        <Space $w={15} /><OutlookIcon /><Space $w={5} /><Fit w={53}>Outlook</Fit><Space $w={16} /><GlobeIcon /><Space $w={5} /><Fit w={127}>invence.ashesi.local</Fit>
        <Space $w={51} /><Svg w={17} h={16}><path d="M1.500 1L8 8L1.500 15M9 1L15.500 8L9 15" stroke="#fbfbfe" strokeWidth="1.500" /></Svg>
        <Space $w={18} /><Svg w={20} h={18}><path d="M1 3.500C1 2 1.500 1.500 3 1.500H7.500L9.500 3.800H16C17.500 3.800 18 4.500 18 6V14C18 15.500 17.500 16 16 16H3C1.500 16 1 15.500 1 14Z" stroke="#fbfbfe" strokeWidth="1.500" /></Svg><Space $w={4} /><Fit w={114}>Other Bookmarks</Fit>
      </Bookmarks>
      <View>
        <DocSide>
          <Doc>
            <Step mt={24} w={257}>p 3: Check connectivity.</Step>
            <Item mt={11} mark="a." w={877}>Return to <b>PC-B</b> and ping the default gateway again to ensure communication is working between</Item>
            <Text mt={0} w={108}>the devices.</Text>
            <Item mt={13} mark="b." w={746}>Return to the <b>Web Browser</b> on <b>PC-B</b> and attempt to connect to the <b><Marked>www.devas</Marked>c<Marked>-</Marked></b></Item>
            <Text w={498}><Marked><b>netacad.pka</b> </Marked>web page on the <b>DEVASC Server</b> again.</Text>
            <Text mt={12} w={185}>It still does not work.</Text>
            <DocLine $mt={28} $x={-8} $fs={26} $bold><Fit w={267}>rt 3: Troubleshoot R1</Fit></DocLine>
            <DocLine $mt={15} $x={-3}><Fit w={905}>In this Part, you will continue troubleshooting on the next device in the path, <b>R1</b>, because you do not</Fit></DocLine>
            <DocLine $mt={-1} $x={-4}><Fit w={495}>have any control over the devices in the Internet cloud.</Fit></DocLine>
            <Step mt={26} w={436}>p 1: Check the basic configuration of R1.</Step>
            <Text mt={13} w={861}>By looking at the Packet Tracer work area, we can see that there is a physical problem with the</Text>
            <Text w={336}>cabling between <b>R1</b> and <b>FIREWALL</b>.</Text>
            <Item mt={13} mark="a." w={312}>Click <b>R1</b>, and then the <b>Config</b> tab.</Item>
            <Item mt={11} mark="b." w={369}>Check the <b>Port Status</b> of each interface.</Item>
            <Text mt={12} w={156}>The ports are up.</Text>
            <Text mt={12} w={874}>The network between the devices is 209.165.200.224/29. The IP addresses of the ports at either</Text>
            <Text mt={0} w={645}>end of the cable must fall in this range for communication to take place.</Text>
            <Step mt={26} w={223}>p 2: Check the cable.</Step>
            <Item mt={12} mark="a." w={216}>Hover over <b>FIREWALL</b>.</Item>
            <Text mt={12} w={511}>VLAN2 has an acceptable IP address, and the link is up.</Text>
            <Item mt={11} mark="b." w={136}>Hover over <b>R1</b>.</Item>
            <Text mt={13} w={881}>G0/0/0 has an acceptable IP address, and the link is up. The problem is the cable itself. It may be</Text>
            <Text mt={0} w={485}>damaged, or it may be connected to an incorrect port.</Text>
            <Text mt={11} w={561}>You will need to re-cable the connection between the devices.</Text>
          </Doc>
          <HScroll $h={21}><Space $w={144} /><Thumb $w={562} $h={21} /><Grow /><Chevron dir="right" w={7} sw={2.600} /><Space $w={5} /></HScroll>
        </DocSide>
        <VScroll $w={21}><ArrowCell $h={319} $pt={5}><Chevron dir="up" w={7} sw={2.600} /></ArrowCell><Thumb $w={21} $h={527} /><ArrowCell $h={42} $pt={7}><Chevron dir="down" w={7} sw={2.600} /></ArrowCell></VScroll>
      </View>
    </Fox>
  );
}

/* ---------- taskbar drawings ---------- */
const PumaArt = () => (
  <Svg w={97} h={48}>
    <path d="M3 0L22 22L38 48H80L76 34L97 18V28L84 40V48H34L14 18Z" fill="#8b6a50" /><path d="M2 0H9L30 26L52 32L76 30L97 16V30L82 42L80 48H38L26 26Z" fill="#8d6c55" />
    <path d="M14 0L18 10M97 34L88 40" stroke="#7a5b45" strokeWidth="3" />
    <path d="M28 8C32 3 42 3 46 8L52 12C62 8 76 12 82 20C86 26 84 30 78 30C72 32 70 36 64 42C62 48 54 48 56 44L62 32C58 30 56 30 54 33L50 48H44C46 40 46 32 44 26L42 18C34 22 28 16 28 8Z" fill="#e3ab68" />
    <path d="M50 14C60 11 72 14 78 22C72 20 66 24 60 27C54 28 50 22 50 14Z" fill="#efc080" />
    <path d="M29 12C31 10 36 10 38 13C39 17 35 20 31 18C28 16 28 14 29 12Z" fill="#f0dcc0" /><path d="M30 12H34L32 15ZM36 9L41 10M28 10L30 9" fill="#3a2a20" stroke="#3a2a20" strokeWidth="1.200" />
    <circle cx="27" cy="8" r="2.500" fill="#c98b50" /><circle cx="45" cy="8" r="3" fill="#b98050" />
    <path d="M84 30C80 40 84 48 90 46C96 44 94 38 90 39" stroke="#d79c5b" strokeWidth="3" />
    <path d="M0 7C4 2 10 6 12 13C8 17 1 14 0 7ZM14 20C18 16 30 22 33 31C26 36 16 30 14 20ZM86 16C88 8 94 8 97 10V20C92 24 86 22 86 16ZM90 32C92 28 95 28 97 28V36C93 37 90 36 90 32Z" fill="#7cb63a" />
    <path d="M2 6L10 11M16 21L30 30" stroke="#a5d75c" strokeWidth="2" />
  </Svg>
);
const EdgeArt = () => (
  <Svg w={31} vb="0 0 31 31">
    <defs><linearGradient id="eg" x1="0" y1=".3" x2="1" y2=".2"><stop offset="0" stopColor="#1f9fe0" /><stop offset=".6" stopColor="#35c4d0" /><stop offset="1" stopColor="#63dc55" /></linearGradient></defs>
    <circle cx="15.500" cy="15.500" r="15" fill="#0d56a8" />
    <path d="M.5 15C1 6 8 .5 15.500 .5C24 .5 30.500 6 30.500 13.500C30.500 19 26 21.500 22 21.500C18 21.500 17 20 18 18.500C20 15 18 10 12.500 10C6 10 1 14 .5 19Z" fill="url(#eg)" />
    <path d="M18 18.500C16.500 20.500 18 22 22 22C25 22 27.500 21 28.500 20.500C24 25 15 25 13.500 20C13 17 14.500 15 16 14C18 14.500 19 16.500 18 18.500Z" fill="#1f3238" />
    <path d="M9 13C5 20 8 28 17 30.400C8 31.500 1 26 .5 18C2 14.500 5 13 9 13Z" fill="#1a7fd0" />
  </Svg>
);
const FolderArt = () => <Svg w={28} h={24}><path d="M0 2C0 .8 .6 .5 1.500 .5H11L14 3.500H28V22H0Z" fill="#e5a11a" /><path d="M0 6L11 6L14 3.500H28V23H0Z" fill="#fcd05c" /><path d="M5 23V15C5 13.500 6 12.500 7.500 12.500H21.500C23 12.500 23.500 13.500 23.500 15V23H18.500V18H10V23Z" fill="#3f96de" /></Svg>;
const StoreArt = () => <Svg w={30} h={31}><path d="M8 6V2H21V6" stroke="#28a8ea" strokeWidth="2.200" /><path d="M1 5H29V25C29 28 27 30 24 30H6C3 30 1 28 1 25Z" fill="#f4f4f4" /><rect x="9.500" y="11.500" width="5.200" height="5.200" fill="#f25022" /><rect x="15.700" y="11.500" width="5.200" height="5.200" fill="#7fba00" /><rect x="9.500" y="17.700" width="5.200" height="5.200" fill="#00a4ef" /><rect x="15.700" y="17.700" width="5.200" height="5.200" fill="#ffb900" /></Svg>;
const MailArt = () => <Svg w={30} h={25}><path d="M0 9L15 .5L30 9V24.500H0Z" fill="#fff" /><path d="M2.500 9.500L27.500 9.500L17 14.500L25 20L11 14Z" fill="#1f3238" /></Svg>;
const ChromeArt = () => <Svg w={31}><circle cx="15.500" cy="15.500" r="15" fill="#fbc116" /><path d="M2.500 8A15 15 0 0 1 28.500 8L15.500 8L10 19Z" fill="#e33b2e" /><path d="M2.500 8A15 15 0 0 0 15.500 30.500L22 19.300L9 19.300Z" fill="#269b4d" /><path d="M15.500 8H28.500L29 17L22 19Z" fill="#fbc116" /><circle cx="15.500" cy="15.500" r="7.500" fill="#fff" /><circle cx="15.500" cy="15.500" r="6" fill="#2f7de8" /></Svg>;
const BingArt = () => <Svg w={14} h={22}><path d="M0 1C0 0 1 0 1.500 .5L4 2C4.500 2.500 4.500 3 4.500 4V16L3 20C1 19 0 18 0 16Z" fill="#37a5f0" /><path d="M5.500 7L11.500 10C15 12 14.500 16 12.500 17.500L6 20.800C3 22 .5 19.500 .5 17C1.500 18.500 3 18 4.500 17L9.500 14L7.500 12.500Z" fill="#2bb6ea" /></Svg>;
const XamppArt = () => <Svg w={30}><rect width="30" height="30" rx="3" fill="#f5761f" /><path d="M3 2.500H27" stroke="#fbb27c" strokeWidth="1.500" /><path d="M9 8C12 8 12.500 10.500 15 10.500S18 8 21 8C25 8 25 12.500 22 15C25 17.500 25 22 21 22S17.500 19.500 15 19.500S12 22 9 22C5 22 5 17.500 8 15C5 12.500 5 8 9 8Z" stroke="#fff" strokeWidth="3.600" /><path d="M11 12L19 18M19 12L11 18" stroke="#fff" strokeWidth="1.500" /></Svg>;
const WordArt = () => <Svg w={30} h={28}><path d="M7 1H29V8H7Z" fill="#41a5ee" /><path d="M7 7.500H29V14.500H7Z" fill="#2b7cd3" /><path d="M7 14H29V21H7Z" fill="#185abd" /><path d="M7 20.500H29V27.500H7Z" fill="#103f91" /><rect x="0" y="6" width="16" height="16" rx="1" fill="#185abd" /><text x="8" y="18.200" textAnchor="middle" fill="#fff" fontFamily="Noto Sans, sans-serif" fontWeight="700" fontSize="12">W</text></Svg>;

function Bar() {
  const blue = "#76b9ed";
  const apps = [
    [<EdgeArt />, blue], [<FolderArt />, blue], [<StoreArt />], [<MailArt />], [<FoxLogo s={29} />, blue],
    [<ChromeArt />, "#3fdc3a", "linear-gradient(to right, #407a45 49%, #3d4d4f 49%)"], [<BingArt />], [<XamppArt />], [<WordArt />, blue],
  ];
  return (
    <Taskbar>
      <Start><Svg w={20}><path d="M0 2.800L8.500 1.500V9.500H0ZM9.500 1.300L20 0V9.500H9.500ZM0 10.500H8.500V18.500L0 17.200ZM9.500 10.500H20V20L9.500 18.700Z" fill="#fff" /></Svg></Start>
      <Search>
        <Svg w={22}><circle cx="13" cy="8" r="6.500" stroke="#e0e0e0" strokeWidth="1.500" /><path d="M8.500 12.500L1 20" stroke="#e0e0e0" strokeWidth="1.500" /></Svg>
        <Space $w={14} /><Fit w={163}>Type here to search</Fit><Grow /><PumaArt />
      </Search>
      <Space $w={20} /><Svg w={20}><path d="M.7 0V4H13.500V0M.7 20V16H13.500V20M.7 6H13.500V14H.7ZM18.500 0V4M18.500 11V20" stroke="#eee" strokeWidth="1.300" /><rect x="17" y="6.500" width="3" height="3" fill="#fff" /></Svg><Space $w={23} />
      {apps.map(([art, line, bg], i) => <AppSlot key={i}><AppCell $line={line} $bg={bg}>{art}</AppCell></AppSlot>)}
      <Space $w={1} /><AppCell $w={56} $line={blue} $bg="#4e5d62"><TracerLogo s={29} /></AppCell><Space $w={1} /><AppCell $w={4} $line={blue} $bg="#414f53" />
      <Space $w={119} />
      <Svg w={29}><defs><linearGradient id="sun" x1="0" y1="0" x2="0" y2="1"><stop offset="0" stopColor="#fbb91d" /><stop offset="1" stopColor="#f0640c" /></linearGradient></defs><circle cx="13" cy="15.500" r="12.500" fill="url(#sun)" /><path d="M14 24C9 24 9 18 13 18C14 13 21 12 23 17C29 17 29 24 25 24Z" fill="#c9dcfa" /><circle cx="24" cy="4" r="3.800" fill="#cf2a1e" /></Svg>
      <Space $w={8} /><TrayText $fs={17}><Fit w={38}>32°C</Fit></TrayText><Space $w={11} /><TrayText $fs={17}><Fit w={105}>Mostly sunny</Fit></TrayText>
      <Space $w={30} /><Svg w={17} h={10}><path d="M1 9L8.500 1.500L16 9" stroke="#fff" strokeWidth="1.400" /></Svg>
      <Space $w={14} /><Svg w={16} h={20}><rect x="1" y="5" width="9" height="10" rx="1.500" stroke="#fff" strokeWidth="1.300" /><path d="M10 8.500L14 6V14L10 11.500M2 2C4.500 .5 8 .5 10 2M2 18C4.500 19.500 8 19.500 10 18" stroke="#fff" strokeWidth="1.200" /></Svg>
      <Space $w={10} /><Svg w={21} h={14}><path d="M4 13C-1 13 0 6 4.500 6C6 0 14 -1 16 5C21 5 21.500 13 17 13Z" fill="#a9a9a9" /><path d="M4 13C1 13 0 9 3.500 7.500L9 6L17 13Z" fill="#d8d8d8" /><path d="M5 13L15 6.500C20 5 22 13 17 13Z" fill="#fff" /></Svg>
      <Space $w={10} /><Svg w={21}><path d="M4 14C-1 14 0 8 4.500 7C6 1 14 1 15 7C19 7 20 12 17 14Z" fill="#0f6fd0" /><path d="M3 14C0 12 2 8 6 8L12 14Z" fill="#35a5ee" /><circle cx="14.500" cy="13.500" r="6" fill="#eef5fc" /><path d="M11.500 13A3.200 3.200 0 0 1 17 11.500M17.500 14A3.200 3.200 0 0 1 12 15.500M17 9.500V12H15M12 17.500V15H14" stroke="#1b6fc4" strokeWidth="1.300" /></Svg>
      <Space $w={9} /><Svg w={21} h={16}><path d="M8 4H18V14H5V9M18.500 7H20V11H18.500M1 3H7V5C7 7 5 8 4 8S1 7 1 5ZM2.500 0V3M5.500 0V3M4 8V13" stroke="#fff" strokeWidth="1.200" /><rect x="6.500" y="6" width="4" height="6.500" fill="#fff" /></Svg>
      <Space $w={12} /><Svg w={16}><path d="M.7 15.500C1 7 7 1 15.500 .7" stroke="#8a8a86" strokeWidth="1.200" /><path d="M4 15.500C4.500 9 9 5 15.500 4.500M7.500 15.500C8 11.500 11 9 15.500 8.500M11 15.500C11.500 13.500 13 12.500 15.500 12" stroke="#d8d8d6" strokeWidth="1.300" /><circle cx="14" cy="14.500" r="1.500" fill="#fff" /></Svg>
      <Space $w={12} /><Svg w={19} h={14}><path d="M1 4.500H3.500L7 1V13L3.500 9.500H1ZM11 3.500L18 10.500M18 3.500L11 10.500" stroke="#fff" strokeWidth="1.200" /></Svg>
      <Space $w={13} /><TrayText $fs={15}><Fit w={28}>ENG</Fit></TrayText><Space $w={17} />
      <Clock><Fit w={34}>16:12</Fit><Fit w={75}>13/03/2023</Fit></Clock>
      <Space $w={23} />
      <Notice><Svg w={21} h={22}><path d="M0 1H20V17H10L5 21V17H0Z" fill="#fff" /><path d="M4 5H16M4 9H16M4 13H11" stroke="#2b2a24" strokeWidth="1.300" /></Svg><Badge>4</Badge></Notice>
      <Grow /><TrayEdge />
    </Taskbar>
  );
}

export default function App() {
  return (
    <Desktop>
      <Global />
      <Windows><TracerWindow /><FirefoxWindow /></Windows>
      <Bar />
    </Desktop>
  );
}
